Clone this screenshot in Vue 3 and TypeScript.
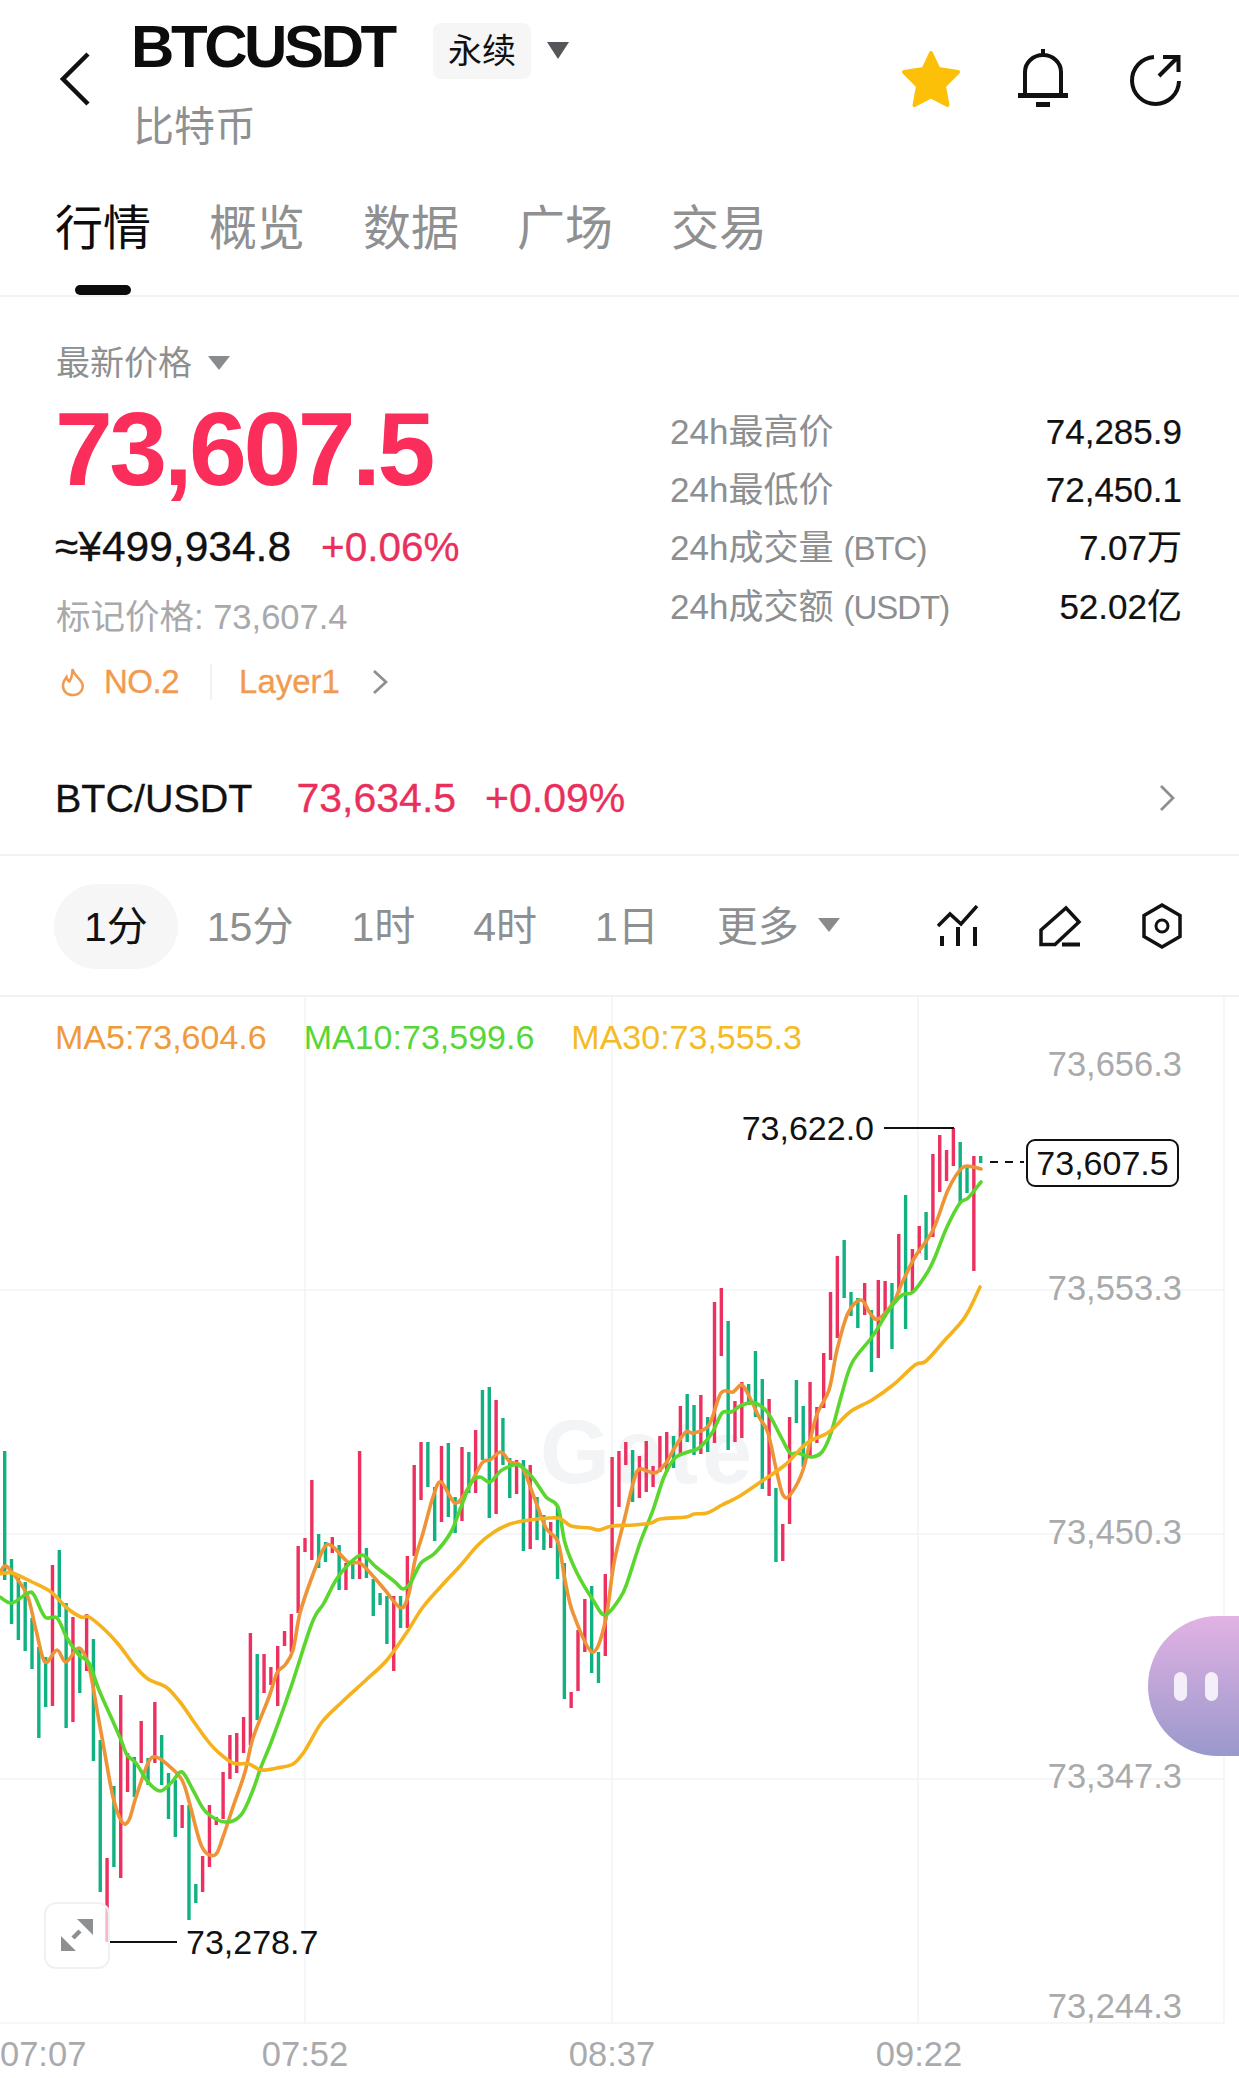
<template>
  <div class="page">
    <header class="top">
      <svg class="back" width="32" height="56" viewBox="0 0 32 56">
        <path d="M28 3 3 28l25 25" fill="none" stroke="#111" stroke-width="4.5" />
      </svg>
      <div class="coin">
        <div class="coin-line">
          <span class="symbol">BTCUSDT</span>
          <span class="tag">永续</span>
          <i class="caret caret-dark"></i>
        </div>
        <div class="coin-name">比特币</div>
      </div>
      <div class="actions">
        <svg class="star" width="60" height="58" viewBox="0 0 60 58">
          <path
            d="M30 3 37.500 19 57 22 43 36 46.500 55 30 46.500 13.500 55 17 36 3 22 22.500 19Z"
            fill="#fdc008"
            stroke="#fdc008"
            stroke-width="4"
            stroke-linejoin="round"
          />
        </svg>
        <svg class="bell" width="50" height="60" viewBox="0 0 50 60">
          <path d="M7 46V23a18 17 0 0 1 36 0v23M25 0v6" fill="none" stroke="#111" stroke-width="4" />
          <path d="M0 46.500h50" stroke="#111" stroke-width="5" />
          <rect x="18" y="53" width="14" height="5" fill="#111" />
        </svg>
        <svg class="share" width="53" height="53" viewBox="0 0 53 53">
          <path
            d="M25 3A23.500 23.500 0 1 0 50 27M30 22 49 3M34 3h15.500v15"
            fill="none"
            stroke="#111"
            stroke-width="4"
          />
        </svg>
      </div>
    </header>

    <nav class="tabs">
      <div v-for="(tab, i) in tabs" :key="tab" class="tab" :class="{ active: i === 0 }">
        {{ tab }}
        <span v-if="i === 0" class="tab-bar"></span>
      </div>
    </nav>

    <section class="summary">
      <div class="summary-left">
        <div class="price-label">最新价格<i class="caret caret-grey"></i></div>
        <div class="price">73,607.5</div>
        <div class="price-sub">
          <span class="cny">≈¥499,934.8</span>
          <span class="pct">+0.06%</span>
        </div>
        <div class="mark">标记价格: 73,607.4</div>
        <div class="rank">
          <svg width="26" height="30" viewBox="0 0 26 30">
            <path
              d="M12.500 2C13.500 8 19.500 10.500 22 16c2.500 6-2 12-9 12S2.500 23 3 17.500c.3-3 2-5.500 3.500-7.500.5 2.500 1.500 4 3 4.500C11.500 11 12.500 6.500 12.500 2Z"
              fill="none"
              stroke="#f29a4f"
              stroke-width="2.500"
            />
          </svg>
          <span class="rank-no">NO.2</span>
          <span class="rank-sep"></span>
          <span class="rank-name">Layer1</span>
          <svg class="rank-go" width="16" height="26" viewBox="0 0 16 26">
            <path d="M2 2l12 11L2 24" fill="none" stroke="#8e8f91" stroke-width="2.800" />
          </svg>
        </div>
      </div>
      <div class="stats">
        <div v-for="s in stats" :key="s.label" class="stat">
          <span class="stat-label">{{ s.label }}<span v-if="s.unit" class="stat-unit">{{ s.unit }}</span></span>
          <span class="stat-value">{{ s.value }}</span>
        </div>
      </div>
    </section>

    <div class="spot">
      <span class="spot-name">BTC/USDT</span>
      <span class="spot-price">73,634.5</span>
      <span class="spot-pct">+0.09%</span>
      <svg class="spot-go" width="16" height="28" viewBox="0 0 16 28">
        <path d="M2 2l12 12L2 26" fill="none" stroke="#8e8f91" stroke-width="2.800" />
      </svg>
    </div>

    <div class="toolbar">
      <span v-for="(p, i) in periods" :key="p" class="period" :class="{ active: i === 0 }">{{ p }}</span>
      <span class="period more">更多<i class="caret caret-grey"></i></span>
      <div class="tools">
        <svg width="42" height="42" viewBox="0 0 42 42">
          <path d="M1 21 13 9l11 10L40 1" fill="none" stroke="#111" stroke-width="3.500" />
          <path d="M5 31v10M21 22v19M38 22v19" stroke="#111" stroke-width="4" />
        </svg>
        <svg width="44" height="42" viewBox="0 0 44 42">
          <path d="M3 39.500V25L28 3l13 14-24 22.500Z" fill="none" stroke="#111" stroke-width="3.500" />
          <path d="M24 39.500h18" stroke="#111" stroke-width="4" />
        </svg>
        <svg width="42" height="46" viewBox="0 0 42 46">
          <path d="M21 2 39 12.500v21L21 44 3 33.500v-21Z" fill="none" stroke="#111" stroke-width="3.500" />
          <circle cx="21" cy="23" r="6" fill="none" stroke="#111" stroke-width="3" />
        </svg>
      </div>
    </div>

    <section class="chart">
      <svg class="plot" width="1239" height="1081" viewBox="0 997 1239 1081">
        <g stroke="#f2f3f4" stroke-width="1.500">
          <path v-for="x in gridX" :key="x" :d="`M${x} 997V2023`" />
          <path v-for="y in gridY" :key="y" :d="`M0 ${y}H1224`" />
        </g>
        <text x="540" y="1483" class="watermark">Gate</text>
        <rect
          v-for="(c, i) in candles"
          :key="i"
          :x="candleX(i) - 1.700"
          :y="c[0]"
          width="3.400"
          :height="c[1] - c[0]"
          :fill="c[2] ? '#ec3160' : '#12b181'"
        />
        <path :d="smooth(ma5)" class="ma" stroke="#ee9336" />
        <path :d="smooth(ma10)" class="ma" stroke="#5ad62f" />
        <path :d="smooth(ma30)" class="ma" stroke="#f5b21c" />

        <text v-for="t in axisY" :key="t.label" x="1182" :y="t.y + 11" text-anchor="end" class="axis">{{ t.label }}</text>
        <text v-for="t in axisX" :key="t.label" :x="t.x" y="2066" :text-anchor="t.anchor" class="axis">{{ t.label }}</text>

        <path d="M884 1128H954" stroke="#111" stroke-width="2" />
        <text x="874" y="1140" text-anchor="end" class="callout">73,622.0</text>
        <path d="M108 1942H177" stroke="#111" stroke-width="2" />
        <text x="186" y="1954" class="callout">73,278.7</text>
        <path d="M990 1162H1024" stroke="#111" stroke-width="2" stroke-dasharray="8 7" />
        <rect x="1027" y="1140" width="151" height="46" rx="8" fill="#fff" stroke="#111" stroke-width="2" />
        <text x="1102.500" y="1175" text-anchor="middle" class="callout">73,607.5</text>
      </svg>

      <div class="legend">
        <span class="ma5">MA5:73,604.6</span>
        <span class="ma10">MA10:73,599.6</span>
        <span class="ma30">MA30:73,555.3</span>
      </div>

      <button class="expand">
        <svg width="34" height="33" viewBox="0 0 34 33">
          <path d="M33 0v16L17 0ZM1 32V17l15 15Z" fill="#8e8f91" />
          <path d="M20 12l-7 7" stroke="#8e8f91" stroke-width="4.500" />
        </svg>
      </button>

      <div class="bubble">
        <span class="eye"></span>
        <span class="eye"></span>
      </div>
    </section>
  </div>
</template>

<script setup lang="ts">
type Pt = [number, number]
type Candle = [number, number, number]

const tabs = ['行情', '概览', '数据', '广场', '交易']
const periods = ['1分', '15分', '1时', '4时', '1日']

const stats = [
  { label: '24h最高价', value: '74,285.9' },
  { label: '24h最低价', value: '72,450.1' },
  { label: '24h成交量', unit: '(BTC)', value: '7.07万' },
  { label: '24h成交额', unit: '(USDT)', value: '52.02亿' },
]

const gridX = [305, 612, 918, 1224]
const gridY = [1290, 1534, 1779, 2023]

const axisY = [
  { label: '73,656.3', y: 1065 },
  { label: '73,553.3', y: 1289 },
  { label: '73,450.3', y: 1533 },
  { label: '73,347.3', y: 1777 },
  { label: '73,244.3', y: 2007 },
]
const axisX = [
  { label: '07:07', x: 0, anchor: 'start' },
  { label: '07:52', x: 305, anchor: 'middle' },
  { label: '08:37', x: 612, anchor: 'middle' },
  { label: '09:22', x: 919, anchor: 'middle' },
]

// [top, bottom, red?] in page pixels, one per minute
const candles: Candle[] = [
  [1451, 1580, 0], [1559, 1624, 0], [1578, 1640, 0], [1582, 1651, 0], [1618, 1669, 0], [1647, 1738, 0],
  [1657, 1707, 0], [1565, 1706, 1], [1550, 1617, 0], [1603, 1728, 0], [1617, 1722, 1], [1648, 1693, 0],
  [1614, 1671, 1], [1639, 1761, 0], [1740, 1892, 0], [1858, 1942, 1], [1786, 1867, 0], [1695, 1878, 1],
  [1753, 1792, 1], [1757, 1797, 0], [1721, 1763, 1], [1758, 1785, 0], [1702, 1763, 1], [1735, 1785, 0],
  [1773, 1819, 0], [1780, 1837, 0], [1805, 1828, 1], [1805, 1920, 0], [1884, 1903, 0], [1856, 1892, 1],
  [1805, 1867, 1], [1817, 1825, 1], [1772, 1819, 1], [1735, 1779, 1], [1733, 1773, 1], [1717, 1753, 1],
  [1633, 1745, 1], [1654, 1720, 0], [1654, 1693, 1], [1667, 1685, 1], [1646, 1706, 1], [1631, 1646, 1],
  [1614, 1652, 1], [1546, 1613, 1], [1538, 1552, 1], [1480, 1560, 1], [1534, 1568, 0], [1542, 1562, 0],
  [1537, 1553, 1], [1545, 1590, 0], [1563, 1590, 1], [1563, 1579, 0], [1451, 1579, 1], [1548, 1578, 0],
  [1579, 1616, 0], [1593, 1605, 0], [1596, 1644, 0], [1596, 1671, 1], [1596, 1628, 0], [1556, 1628, 1],
  [1465, 1556, 1], [1442, 1500, 1], [1442, 1487, 0], [1487, 1541, 0], [1446, 1522, 1], [1443, 1517, 0],
  [1497, 1533, 0], [1447, 1521, 1], [1452, 1493, 0], [1430, 1493, 1], [1390, 1460, 0], [1387, 1518, 0],
  [1400, 1514, 1], [1418, 1465, 0], [1458, 1498, 0], [1460, 1494, 1], [1460, 1551, 0], [1465, 1549, 1],
  [1497, 1540, 0], [1515, 1550, 0], [1522, 1548, 1], [1507, 1579, 0], [1563, 1699, 0], [1692, 1708, 1],
  [1630, 1691, 1], [1599, 1652, 1], [1586, 1673, 0], [1652, 1683, 0], [1574, 1656, 1], [1457, 1574, 1],
  [1451, 1507, 1], [1442, 1465, 1], [1450, 1502, 0], [1456, 1498, 1], [1441, 1492, 1], [1466, 1487, 1],
  [1436, 1472, 1], [1432, 1472, 1], [1436, 1468, 0], [1406, 1453, 1], [1394, 1442, 0], [1405, 1455, 0],
  [1395, 1454, 1], [1417, 1452, 0], [1302, 1443, 1], [1288, 1356, 1], [1321, 1450, 0], [1401, 1442, 1],
  [1382, 1438, 1], [1384, 1405, 0], [1351, 1417, 0], [1379, 1489, 0], [1399, 1496, 1], [1488, 1562, 0],
  [1524, 1561, 1], [1417, 1524, 1], [1380, 1423, 0], [1406, 1467, 0], [1382, 1458, 1], [1407, 1443, 1],
  [1353, 1408, 1], [1292, 1360, 1], [1256, 1338, 1], [1240, 1298, 0], [1292, 1316, 0], [1298, 1328, 0],
  [1283, 1315, 1], [1310, 1372, 0], [1280, 1358, 1], [1281, 1317, 1], [1283, 1349, 0], [1234, 1293, 1],
  [1195, 1329, 0], [1249, 1293, 1], [1226, 1253, 1], [1212, 1260, 0], [1154, 1237, 1], [1135, 1192, 1],
  [1150, 1181, 1], [1128, 1166, 1], [1142, 1202, 0], [1168, 1193, 0], [1156, 1271, 1], [1156, 1163, 0],
]

const ma5: Pt[] = [
  [0, 1573], [6, 1566], [18, 1580], [28, 1597], [36, 1630], [45, 1662], [57, 1650], [66, 1662], [79, 1648],
  [89, 1667], [97, 1710], [103, 1743], [113, 1797], [122, 1822], [129, 1820], [136, 1797], [148, 1763],
  [156, 1757], [168, 1765], [182, 1780], [190, 1805], [202, 1847], [215, 1855], [223, 1837], [233, 1807],
  [245, 1772], [253, 1738], [269, 1697], [277, 1673], [285, 1665], [293, 1650], [300, 1613], [312, 1577],
  [324, 1548], [332, 1546], [348, 1562], [360, 1563], [372, 1575], [385, 1590], [401, 1608], [409, 1593],
  [415, 1560], [423, 1533], [433, 1497], [441, 1482], [455, 1503], [467, 1490], [482, 1463], [490, 1460],
  [501, 1452], [510, 1462], [522, 1467], [534, 1497], [546, 1528], [558, 1542], [565, 1580], [573, 1613],
  [592, 1652], [605, 1623], [614, 1563], [625, 1517], [634, 1480], [640, 1469], [655, 1473], [666, 1463],
  [675, 1447], [686, 1432], [694, 1433], [709, 1425], [721, 1393], [733, 1392], [742, 1385], [751, 1400],
  [759, 1417], [768, 1433], [777, 1473], [783, 1495], [790, 1495], [803, 1470], [816, 1417], [829, 1390],
  [837, 1350], [848, 1313], [861, 1300], [870, 1313], [878, 1319], [893, 1303], [902, 1283], [915, 1257],
  [933, 1230], [948, 1190], [962, 1168], [973, 1167], [981, 1169],
]

const ma10: Pt[] = [
  [0, 1597], [12, 1603], [28, 1593], [34, 1595], [45, 1617], [57, 1618], [67, 1638], [79, 1655], [89, 1663],
  [99, 1690], [111, 1717], [121, 1740], [127, 1755], [136, 1763], [148, 1782], [160, 1791], [172, 1782],
  [182, 1772], [194, 1792], [206, 1812], [225, 1822], [241, 1815], [253, 1790], [261, 1767], [272, 1740],
  [291, 1687], [312, 1623], [324, 1603], [336, 1580], [348, 1565], [362, 1555], [376, 1567], [395, 1582],
  [403, 1589], [411, 1582], [421, 1563], [435, 1553], [451, 1532], [461, 1507], [471, 1483], [480, 1477],
  [490, 1482], [502, 1470], [518, 1465], [532, 1477], [546, 1497], [558, 1507], [565, 1543], [577, 1573],
  [593, 1600], [605, 1615], [620, 1598], [627, 1583], [640, 1543], [653, 1510], [664, 1477], [675, 1458],
  [688, 1452], [699, 1448], [712, 1433], [722, 1413], [731, 1412], [742, 1405], [755, 1403], [768, 1413],
  [781, 1437], [790, 1453], [798, 1453], [811, 1457], [822, 1452], [831, 1433], [841, 1397], [852, 1363],
  [872, 1337], [889, 1310], [902, 1295], [913, 1292], [927, 1273], [935, 1257], [947, 1227], [960, 1203],
  [968, 1198], [981, 1182],
]

const ma30: Pt[] = [
  [0, 1574], [12, 1573], [32, 1582], [51, 1592], [67, 1608], [81, 1617], [89, 1617], [105, 1630], [119, 1645],
  [134, 1665], [148, 1679], [166, 1687], [180, 1702], [194, 1722], [207, 1740], [218, 1752], [233, 1763],
  [249, 1764], [261, 1770], [277, 1768], [293, 1764], [304, 1752], [310, 1742], [322, 1722], [342, 1702],
  [366, 1680], [387, 1660], [407, 1632], [423, 1607], [445, 1582], [460, 1566], [478, 1545], [494, 1532],
  [510, 1524], [530, 1520], [558, 1518], [571, 1526], [590, 1528], [599, 1530], [612, 1526], [634, 1525],
  [651, 1523], [660, 1519], [686, 1517], [694, 1514], [707, 1513], [722, 1505], [738, 1497], [759, 1483],
  [785, 1465], [807, 1443], [829, 1432], [850, 1412], [872, 1400], [893, 1385], [915, 1365], [926, 1361],
  [945, 1340], [965, 1317], [980, 1287],
]

const candleX = (i: number) => 4.7 + i * 6.825

// catmull-rom through the points
function smooth(pts: Pt[]): string {
  let d = `M${pts[0][0]} ${pts[0][1]}`
  for (let i = 0; i < pts.length - 1; i++) {
    const p0 = pts[i - 1] ?? pts[i]
    const p1 = pts[i]
    const p2 = pts[i + 1]
    const p3 = pts[i + 2] ?? p2
    const c1x = p1[0] + (p2[0] - p0[0]) / 6
    const c1y = p1[1] + (p2[1] - p0[1]) / 6
    const c2x = p2[0] - (p3[0] - p1[0]) / 6
    const c2y = p2[1] - (p3[1] - p1[1]) / 6
    d += `C${c1x.toFixed(1)} ${c1y.toFixed(1)} ${c2x.toFixed(1)} ${c2y.toFixed(1)} ${p2[0]} ${p2[1]}`
  }
  return d
}
</script>

<style scoped>
.page {
  position: relative;
  width: 1239px;
  height: 2078px;
  overflow: hidden;
  background: #fff;
  color: #111;
  font-family: "Liberation Sans", "Noto Sans CJK SC", sans-serif;
}
.caret {
  display: inline-block;
  width: 0;
  height: 0;
  border-left: 11px solid transparent;
  border-right: 11px solid transparent;
}
.caret-dark {
  border-top: 17px solid #55565a;
  margin: 5px 0 0 16px;
}
.caret-grey {
  border-top: 14px solid #8a8b8d;
  margin-left: 16px;
}

.top {
  display: flex;
  align-items: flex-start;
  height: 184px;
  padding: 0 57px 0 60px;
  box-sizing: border-box;
}
.back {
  margin-top: 51px;
  flex: none;
}
.coin {
  margin-left: 39px;
}
.coin-line {
  display: flex;
  align-items: center;
  margin-top: 18px;
  height: 60px;
}
.symbol {
  font-size: 60px;
  font-weight: 700;
  letter-spacing: -3.4px;
  width: 302px;
  margin-top: -3px;
  color: #0c0c0c;
}
.tag {
  width: 98px;
  height: 56px;
  margin-top: 5px;
  border-radius: 8px;
  background: #f6f6f6;
  font-size: 34px;
  line-height: 56px;
  text-align: center;
}
.coin-name {
  margin-top: 25px;
  margin-left: 2px;
  font-size: 41px;
  line-height: 48px;
  color: #8f9092;
}
.actions {
  display: flex;
  align-items: flex-start;
  margin-left: auto;
}
.star {
  margin-top: 50px;
}
.bell {
  margin-top: 49px;
  margin-left: 57px;
}
.share {
  margin-top: 54px;
  margin-left: 61px;
}

.tabs {
  display: flex;
  gap: 58px;
  height: 111px;
  padding-left: 55px;
  border-bottom: 2px solid #f2f2f3;
}
.tab {
  display: flex;
  flex-direction: column;
  align-items: center;
  font-size: 48px;
  line-height: 89px;
  color: #8f9092;
}
.tab.active {
  color: #0c0c0c;
}
.tab-bar {
  width: 56px;
  height: 11px;
  margin-top: 12px;
  border-radius: 6px;
  background: #0c0c0c;
}

.summary {
  display: flex;
  height: 443px;
  padding: 44px 57px 0 56px;
  box-sizing: border-box;
}
.price-label {
  display: flex;
  align-items: center;
  font-size: 34px;
  line-height: 44px;
  color: #8e8f91;
}
.price {
  margin: 9px 0 0 -1px;
  font-size: 104px;
  line-height: 110px;
  font-weight: 700;
  letter-spacing: -3.500px;
  color: #fb2d5b;
}
.price-sub {
  display: flex;
  gap: 30px;
  margin-top: 18px;
  line-height: 50px;
}
.cny {
  margin-left: -1px;
  font-size: 42.5px;
  -webkit-text-stroke: 0.3px #111;
}
.pct {
  font-size: 40.5px;
  color: #e9305c;
  -webkit-text-stroke: 0.3px #e9305c;
}
.mark {
  margin-top: 23px;
  font-size: 34.5px;
  line-height: 44px;
  color: #a8a9ab;
}
.rank {
  display: flex;
  align-items: center;
  margin-top: 21px;
  height: 44px;
  font-size: 33px;
  color: #f29a4f;
  -webkit-text-stroke: 0.3px #f29a4f;
}
.rank svg:first-child {
  margin-left: 4px;
}
.rank-no {
  margin-left: 18px;
  letter-spacing: -0.5px;
}
.rank-sep {
  width: 2px;
  height: 36px;
  margin: 0 27px 0 31px;
  background: #f2f2f2;
}
.rank-go {
  margin-left: 32px;
}

.stats {
  width: 512px;
  margin-left: auto;
  padding-top: 62px;
}
.stat {
  display: flex;
  justify-content: space-between;
  font-size: 35px;
  line-height: 58px;
}
.stat-label {
  color: #8e8f91;
}
.stat-unit {
  margin-left: 10px;
  font-size: 33px;
  letter-spacing: -1px;
}
.stat-value {
  color: #111;
  -webkit-text-stroke: 0.2px #111;
}

.spot {
  display: flex;
  align-items: center;
  height: 116px;
  padding: 2px 64px 0 55px;
  box-sizing: border-box;
  border-bottom: 2px solid #f2f2f3;
}
.spot-name {
  font-size: 39.5px;
  -webkit-text-stroke: 0.3px #111;
}
.spot-price {
  margin-left: 44px;
  font-size: 41px;
  color: #e9305c;
  -webkit-text-stroke: 0.3px #e9305c;
}
.spot-pct {
  margin-left: 29px;
  font-size: 41px;
  color: #e9305c;
  -webkit-text-stroke: 0.3px #e9305c;
}
.spot-go {
  margin-left: auto;
}

.toolbar {
  display: flex;
  align-items: center;
  height: 141px;
  padding: 0 56px 0 54px;
  box-sizing: border-box;
  border-bottom: 2px solid #f2f2f3;
}
.period {
  display: flex;
  align-items: center;
  height: 85px;
  margin-top: 2px;
  padding: 0 29px 7px;
  box-sizing: border-box;
  font-size: 41px;
  color: #8e8f91;
}
.period.active {
  padding: 0 30px 7px;
  border-radius: 43px;
  background: #f6f6f6;
  color: #111;
}
.more .caret {
  margin: 4px 0 0 19px;
}
.tools {
  display: flex;
  align-items: center;
  gap: 59px;
  margin-left: auto;
}

.chart {
  position: relative;
  height: 1081px;
}
.plot {
  position: absolute;
  left: 0;
  top: 0;
}
.watermark {
  font-size: 90px;
  font-weight: 700;
  letter-spacing: 4px;
  fill: #f3f4f5;
}
.ma {
  fill: none;
  stroke-width: 3.6;
  stroke-linejoin: round;
  stroke-linecap: round;
}
.axis {
  font-size: 34.5px;
  fill: #a9aaac;
}
.callout {
  font-size: 34px;
  fill: #111;
}
.legend {
  position: relative;
  display: flex;
  gap: 37px;
  padding: 18px 0 0 55px;
  font-size: 34px;
  line-height: 44px;
}
.ma5 {
  color: #ef9a3c;
}
.ma10 {
  color: #57d639;
}
.ma30 {
  color: #f4bb25;
}
.expand {
  position: absolute;
  left: 44px;
  top: 905px;
  display: flex;
  align-items: center;
  justify-content: center;
  width: 66px;
  height: 67px;
  padding: 0;
  border: 2px solid #f1f1f1;
  border-radius: 12px;
  background: rgba(255, 255, 255, 0.65);
}
.bubble {
  position: absolute;
  right: 0;
  top: 619px;
  display: flex;
  gap: 18px;
  align-items: center;
  width: 91px;
  height: 140px;
  padding-left: 26px;
  box-sizing: border-box;
  border-radius: 70px 0 0 70px;
  background: linear-gradient(180deg, #e2b2e4, #9a98cc);
}
.eye {
  width: 13px;
  height: 29px;
  border-radius: 7px;
  background: #f4eef8;
}
</style>
